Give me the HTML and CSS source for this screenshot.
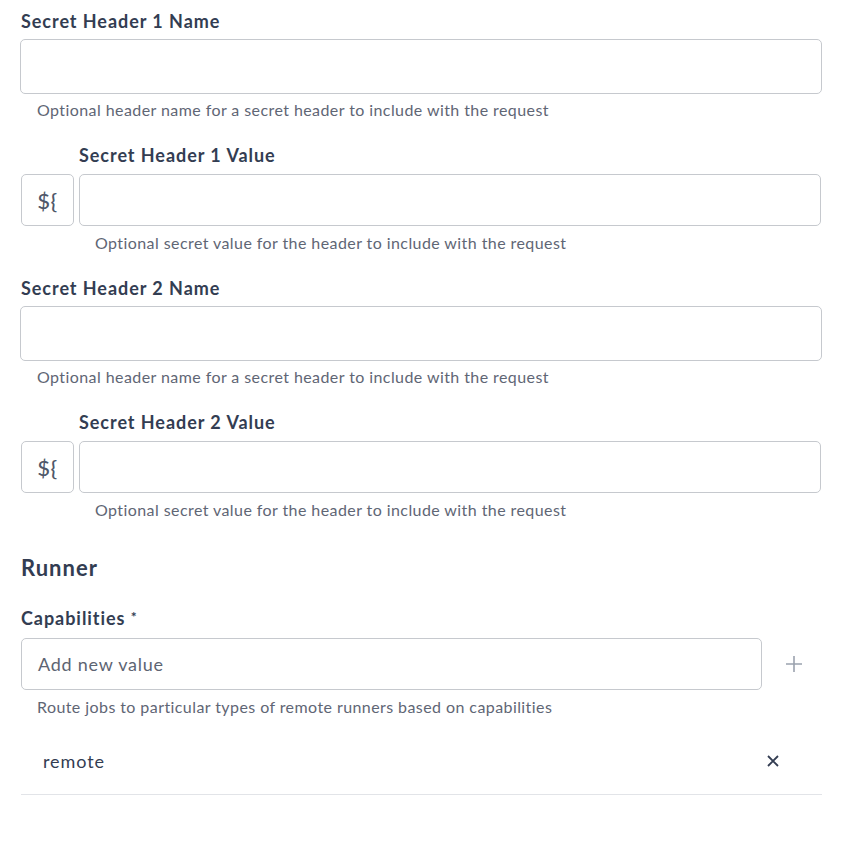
FILE: index.html
```html
<!DOCTYPE html>
<html>
<head>
<meta charset="utf-8">
<link rel="stylesheet" href="styles.css">
</head>
<body>
<div class="form">
  <div class="field">
    <label class="label">Secret Header 1 Name</label>
    <div class="input"></div>
    <div class="help">Optional header name for a secret header to include with the request</div>
  </div>
  <div class="field secret">
    <div class="secret-row">
      <div class="toggle">${</div>
      <div class="secret-col">
        <label class="label">Secret Header 1 Value</label>
        <div class="input short"></div>
        <div class="help">Optional secret value for the header to include with the request</div>
      </div>
    </div>
  </div>
  <div class="field">
    <label class="label">Secret Header 2 Name</label>
    <div class="input"></div>
    <div class="help">Optional header name for a secret header to include with the request</div>
  </div>
  <div class="field secret">
    <div class="secret-row">
      <div class="toggle">${</div>
      <div class="secret-col">
        <label class="label">Secret Header 2 Value</label>
        <div class="input short"></div>
        <div class="help">Optional secret value for the header to include with the request</div>
      </div>
    </div>
  </div>
  <h2 class="section">Runner</h2>
  <div class="field caps">
    <label class="label">Capabilities <span class="req">*</span></label>
    <div class="add-row">
      <div class="input add">Add new value</div>
      <div class="plus">
        <svg width="18" height="18" viewBox="0 0 18 18"><path d="M9 1v16M1 9h16" stroke="#9ba2ae" stroke-width="1.6" fill="none"/></svg>
      </div>
    </div>
    <div class="help">Route jobs to particular types of remote runners based on capabilities</div>
    <div class="item">
      <span class="item-text">remote</span>
      <svg class="remove" width="14" height="14" viewBox="0 0 14 14"><path d="M2 2l10 10M12 2L2 12" stroke="#333d52" stroke-width="1.8" fill="none"/></svg>
    </div>
  </div>
</div>
</body>
</html>
```
FILE: styles.css
```css
* { box-sizing: border-box; }
body {
  margin: 0;
  background: #fff;
  font-family: Lato, "Noto Sans", sans-serif;
  color: #333d52;
}
.form {
  padding: 10px 28px 0 20px;
  width: 850px;
}
.field { margin-bottom: 24px; }
.label {
  display: block;
  font-size: 18px;
  font-weight: 700;
  line-height: 22px;
  letter-spacing: 0.95px;
  padding-left: 1px;
  color: #333d52;
}
.input {
  margin-top: 7px;
  height: 55px;
  border: 1px solid #c6c9ce;
  border-radius: 5px;
  background: #fff;
}
.help {
  margin-top: 6px;
  padding-left: 17px;
  font-size: 16px;
  line-height: 20px;
  color: #5f6675;
  letter-spacing: 0.42px;
}
.secret-row {
  display: flex;
  align-items: flex-start;
}
.toggle {
  margin-top: 30px;
  margin-left: 1px;
  width: 53px;
  height: 52px;
  border: 1px solid #c6c9ce;
  border-radius: 5px;
  display: flex;
  align-items: center;
  justify-content: center;
  font-size: 22px;
  color: #4f586a;
  font-weight: 500;
  letter-spacing: 0.5px;
  flex: none;
}
.secret-col {
  flex: 1;
  margin-left: 5px;
}
.secret-col .label { padding-left: 0; }
.secret-col .input.short {
  margin-top: 8px;
  height: 52px;
  margin-right: 1px;
}
.secret-col .help {
  margin-top: 7px;
  padding-left: 16px;
}
.field.secret { margin-bottom: 24px; }
.section {
  margin: 34px 0 24px 1px;
  font-size: 22px;
  line-height: 28px;
  font-weight: 700;
  letter-spacing: 1px;
  color: #333d52;
}
.req { font-size: 14px; vertical-align: 3px; color: #333d52; letter-spacing: 0; }
.caps .label { padding-left: 1px; }
.add-row {
  display: flex;
  align-items: center;
  margin-top: 9px;
}
.input.add {
  margin-top: 0;
  margin-left: 1px;
  width: 741px;
  height: 52px;
  display: flex;
  align-items: center;
  padding-left: 16px;
  font-size: 18px;
  letter-spacing: 0.75px;
  color: #5d6472;
}
.plus {
  margin-left: 23px;
  width: 18px;
  height: 18px;
  display: flex;
}
.caps .help { margin-top: 7px; padding-left: 17px; }
.item {
  margin-top: 11px;
  margin-left: 1px;
  height: 67px;
  border-bottom: 1px solid #e2e4e8;
  display: flex;
  align-items: center;
  justify-content: space-between;
  padding: 0 42px 0 22px;
}
.item-text {
  font-size: 18px;
  letter-spacing: 0.9px;
  color: #333d52;
}
.remove { flex: none; }
```
